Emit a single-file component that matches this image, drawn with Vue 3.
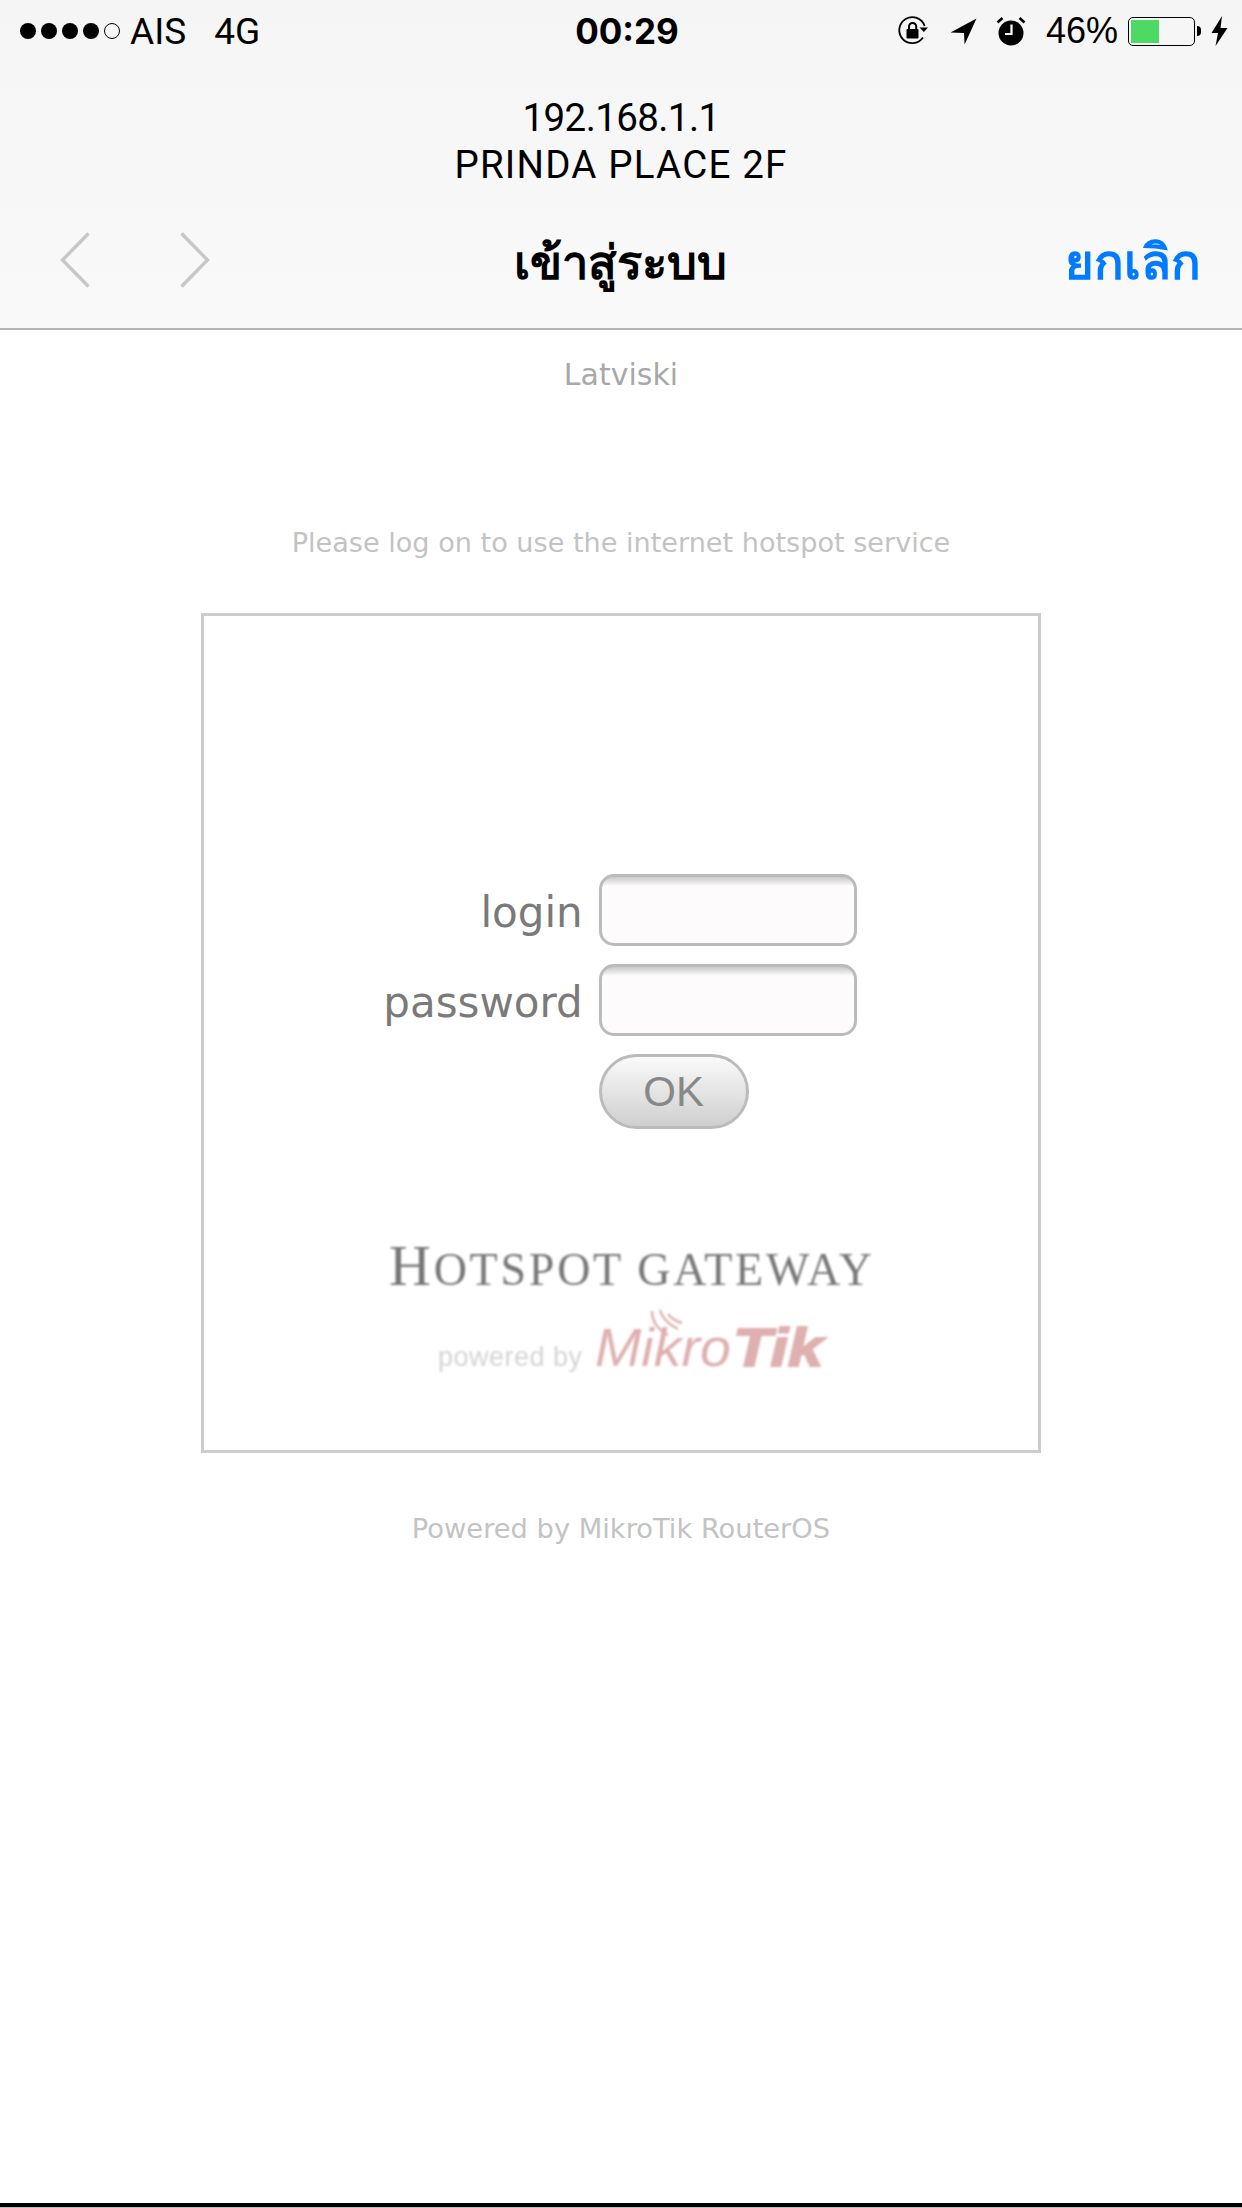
<template>
  <div class="page">
    <header class="browser-bar">
      <div class="status">
        <div class="status-left">
          <span class="dots">
            <i class="dot" v-for="n in 4" :key="n"></i>
            <i class="dot empty"></i>
          </span>
          <span class="carrier">AIS</span>
          <span class="network">4G</span>
        </div>
        <div class="clock">00:29</div>
        <div class="status-right">
          <svg class="ic-lock" width="30" height="30" viewBox="0 0 30 30">
            <path d="M25 21.5A13 13 0 1 1 26.6 10" fill="none" stroke="#000" stroke-width="1.8" />
            <path d="M22.5 11.5h8.5l-4.2 4.6z" fill="#000" transform="translate(-1 0)" />
            <rect x="8.5" y="13" width="12" height="9.5" rx="1" fill="#000" />
            <path d="M11 13V10.5a3.6 3.6 0 0 1 7.2 0V13" fill="none" stroke="#000" stroke-width="2" />
          </svg>
          <svg class="ic-arrow" width="27" height="27" viewBox="0 0 27 27">
            <path d="M26.5 0.5L0.5 14.5L14 15L14.6 26.5z" fill="#000" />
          </svg>
          <svg class="ic-alarm" width="30" height="30" viewBox="0 0 30 30">
            <circle cx="15" cy="17" r="12.5" fill="#000" />
            <path d="M1.5 6.5L6.5 2M28.5 6.5L23.5 2" stroke="#000" stroke-width="2.6" fill="none" />
            <path d="M15.5 8.5V18H9" stroke="#fff" stroke-width="2.2" fill="none" />
          </svg>
          <span class="percent">46%</span>
          <span class="battery"><span class="battery-fill" :style="{ width: batteryLevel + '%' }"></span></span>
          <span class="battery-nub"></span>
          <svg class="ic-bolt" width="17" height="30" viewBox="0 0 17 30">
            <path d="M11 0L0.5 17H7L4.5 30L16.5 12H9.5z" fill="#000" />
          </svg>
        </div>
      </div>
      <div class="prompt">
        <div class="prompt-ip">192.168.1.1</div>
        <div class="prompt-name">PRINDA PLACE 2F</div>
      </div>
      <nav class="nav">
        <div class="arrows">
          <svg width="30" height="56" viewBox="0 0 30 56">
            <path d="M28.5 1.5L2.5 28L28.5 54.5" fill="none" stroke="#c7c7c7" stroke-width="3.4" />
          </svg>
          <svg width="30" height="56" viewBox="0 0 30 56">
            <path d="M1.5 1.5L27.5 28L1.5 54.5" fill="none" stroke="#c7c7c7" stroke-width="3.4" />
          </svg>
        </div>
        <div class="nav-title">เข้าสู่ระบบ</div>
        <div class="nav-cancel">ยกเลิก</div>
      </nav>
    </header>

    <main class="content">
      <a class="lang">Latviski</a>
      <p class="notice">Please log on to use the internet hotspot service</p>

      <section class="login-box">
        <form class="login-form" @submit.prevent>
          <label class="field-label">login</label>
          <input class="field" type="text" />
          <label class="field-label">password</label>
          <input class="field" type="password" />
          <span></span>
          <button class="ok" type="submit">OK</button>
        </form>

        <svg class="logo" width="520" height="140" viewBox="0 0 520 140">
          <text class="logo-title" x="28" y="45" font-size="46"><tspan font-size="58">H</tspan>OTSPOT GATEWAY</text>
          <text class="logo-by" x="77" y="126" font-size="27" textLength="144">powered by</text>
          <text class="logo-mikro" x="234" y="126" font-size="54" textLength="136" lengthAdjust="spacingAndGlyphs">Mikro</text>
          <text class="logo-tik" x="372" y="126" font-size="54" textLength="90" lengthAdjust="spacingAndGlyphs">Tik</text>
          <path class="logo-waves" d="M291 71c0 10 5 18 16 24M299 70c2 8 8 14 18 19M307 74c3 4 7 7 14 9" />
        </svg>
      </section>

      <p class="notice powered">Powered by MikroTik RouterOS</p>
    </main>

    <div class="home-line"></div>
  </div>
</template>

<script setup>
const batteryLevel = 46
</script>

<style>
html,
body {
  margin: 0;
  background: #fff;
}
</style>

<style scoped>
.page {
  width: 1242px;
  height: 2208px;
  display: flex;
  flex-direction: column;
  overflow: hidden;
  background: #fff;
  font-family: Roboto, "Liberation Sans", sans-serif;
}

.browser-bar {
  height: 330px;
  box-sizing: border-box;
  flex-shrink: 0;
  background: linear-gradient(#f5f5f5, #f9f9f9);
  border-bottom: 2px solid #b4b4b4;
  color: #000;
}

.status {
  height: 62px;
  display: grid;
  grid-template-columns: 1fr auto 1fr;
  align-items: center;
  padding: 0 14px 0 20px;
  font-size: 35px;
}

.status-left,
.status-right {
  display: flex;
  align-items: center;
}

.status-left {
  font-size: 37px;
}

.status-right {
  justify-content: flex-end;
}

.dots {
  display: flex;
  gap: 5px;
  margin-right: 10px;
}

.dot {
  display: block;
  width: 16px;
  height: 16px;
  border-radius: 50%;
  background: #000;
}

.dot.empty {
  box-sizing: border-box;
  background: none;
  border: 1.5px solid #000;
}

.carrier {
  margin-right: 28px;
}

.clock {
  font-family: Inter, "Liberation Sans", sans-serif;
  font-size: 35px;
  font-weight: 700;
  margin-left: 6px;
}

.ic-arrow {
  margin-left: 22px;
}

.ic-alarm {
  margin-left: 19px;
}

.percent {
  margin-left: 20px;
  font-family: "Liberation Sans", sans-serif;
  font-size: 36px;
}

.battery {
  display: block;
  box-sizing: border-box;
  width: 67px;
  height: 29px;
  margin-left: 10px;
  padding: 2px;
  border: 1.5px solid #000;
  border-radius: 5px;
}

.battery-fill {
  display: block;
  height: 100%;
  background: #4cd964;
}

.battery-nub {
  width: 4px;
  height: 10px;
  margin-left: 2px;
  background: #000;
  border-radius: 0 4px 4px 0;
}

.ic-bolt {
  margin-left: 10px;
}

.prompt {
  height: 104px;
  padding-top: 32px;
  box-sizing: border-box;
  text-align: center;
  font-size: 38.5px;
  line-height: 47px;
}

.prompt-ip {
  letter-spacing: -0.6px;
}

.prompt-name {
  letter-spacing: 1.2px;
}

.nav {
  height: 162px;
  display: grid;
  grid-template-columns: 1fr auto 1fr;
  align-items: center;
  padding: 18px 41px 8px 60px;
}

.arrows {
  display: flex;
  gap: 90px;
  margin-top: -10px;
}

.nav-title {
  margin: -6px 20px 0 0;
  font-size: 47px;
  font-weight: 700;
}

.nav-cancel {
  justify-self: end;
  margin-top: -6px;
  font-size: 49px;
  font-weight: 600;
  color: #007aff;
}

.content {
  flex: 1;
  display: flex;
  flex-direction: column;
  align-items: center;
  font-family: "DejaVu Sans", Verdana, sans-serif;
}

.lang {
  margin-top: 27px;
  font-size: 30px;
  line-height: 36px;
  color: #a8a8a8;
}

.notice {
  margin: 132px 0 0;
  font-size: 27.1px;
  line-height: 36px;
  color: #c3c3c3;
}

.login-box {
  box-sizing: border-box;
  width: 840px;
  height: 840px;
  margin-top: 52px;
  padding-top: 258px;
  border: 3px solid #ccc;
  display: flex;
  flex-direction: column;
  align-items: center;
}

.login-form {
  display: grid;
  grid-template-columns: auto 258px;
  column-gap: 16px;
  row-gap: 18px;
  align-items: center;
  margin-left: -2px;
}

.field-label {
  justify-self: end;
  padding-top: 5px;
  font-size: 42px;
  color: #7a7a7a;
}

.field {
  box-sizing: border-box;
  width: 258px;
  height: 72px;
  margin: 0;
  padding: 0;
  border: 3px solid #bbb;
  border-radius: 15px;
  background: linear-gradient(#c9c9c9, #fdfbfc 9px);
  outline: none;
}

.ok {
  box-sizing: border-box;
  width: 150px;
  height: 75px;
  padding: 0;
  border: 3px solid #bbb;
  border-radius: 38px;
  background: linear-gradient(#fafafa, #cfcfcf);
  font-family: "Liberation Sans", sans-serif;
  font-size: 42px;
  color: #888;
}

.logo {
  margin-top: 111px;
  filter: blur(1px);
}

.logo-title {
  font-family: "Liberation Serif", serif;
  letter-spacing: 2.75px;
  fill: #777;
}

.logo-by {
  font-family: "Liberation Sans", sans-serif;
  fill: #d4d4d4;
}

.logo-mikro {
  font-family: "Liberation Sans", sans-serif;
  font-style: italic;
  fill: #dfb0b0;
}

.logo-tik {
  font-family: "Liberation Sans", sans-serif;
  font-style: italic;
  font-weight: 700;
  fill: #dfb0b0;
  stroke: #dfb0b0;
  stroke-width: 2;
}

.logo-waves {
  fill: none;
  stroke: #dfb0b0;
  stroke-width: 2.5;
}

.powered {
  margin-top: 58px;
  font-size: 27.3px;
}

.home-line {
  height: 4px;
  flex-shrink: 0;
  margin-bottom: 1px;
  background: #000;
  box-shadow: 0 1px 0 #bbb;
}
</style>
